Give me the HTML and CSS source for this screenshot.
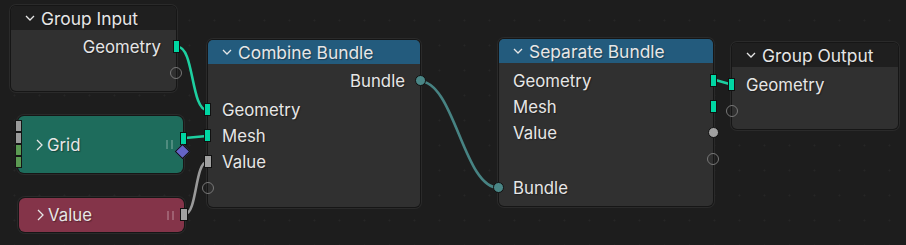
FILE: index.html
```html
<!DOCTYPE html>
<html lang="en">
<head>
    <meta charset="UTF-8">
    <title>Node Editor</title>
    <link rel="stylesheet" href="styles.css">
</head>
<body>
    <div class="canvas">
        <!-- links between sockets -->
        <svg class="links" width="906" height="245" viewBox="0 0 906 245">
            <path class="link geo" d="M178 47 C194 47 191 110 207 110"/>
            <path class="link geo" d="M185 138 L207 136"/>
            <path class="link float" d="M185 214 C197 214 195 162 207 162"/>
            <path class="link bundle" d="M419 81 C455 81 463 188 499 188"/>
            <path class="link geo" d="M712 79 L733 85"/>
        </svg>

        <!-- Group Input -->
        <div class="node group-input">
            <div class="node-header dark">
                <svg class="chevron" width="10" height="6" viewBox="0 0 10 6"><polyline points="1,1 5,5 9,1"/></svg>
                <span>Group Input</span>
            </div>
            <div class="node-body">
                <div class="row out">Geometry<span class="sock geo-sock right"></span></div>
                <div class="row out"><span class="sock empty right"></span></div>
            </div>
        </div>

        <!-- Grid (collapsed) -->
        <div class="node collapsed grid">
            <div class="stack">
                <span class="gray"></span><span class="gray"></span><span class="green"></span><span class="green"></span>
            </div>
            <svg class="chevron-right" width="7" height="12" viewBox="0 0 7 12"><polyline points="1,1 6,6 1,11"/></svg>
            <span class="title">Grid</span>
            <span class="grip"><i></i><i></i></span>
            <span class="sock geo-sock right grid-out"></span>
            <span class="diamond"></span>
        </div>

        <!-- Value (collapsed) -->
        <div class="node collapsed value">
            <svg class="chevron-right" width="7" height="12" viewBox="0 0 7 12"><polyline points="1,1 6,6 1,11"/></svg>
            <span class="title">Value</span>
            <span class="grip"><i></i><i></i></span>
            <span class="sock float-sock right"></span>
        </div>

        <!-- Combine Bundle -->
        <div class="node combine">
            <div class="node-header blue">
                <svg class="chevron" width="10" height="6" viewBox="0 0 10 6"><polyline points="1,1 5,5 9,1"/></svg>
                <span>Combine Bundle</span>
            </div>
            <div class="node-body">
                <div class="row out">Bundle<span class="sock bundle-sock right"></span></div>
                <div class="inputs">
                    <div class="row"><span class="sock geo-sock left"></span>Geometry</div>
                    <div class="row"><span class="sock geo-sock left"></span>Mesh</div>
                    <div class="row"><span class="sock float-sock left"></span>Value</div>
                    <div class="row"><span class="sock empty left"></span></div>
                </div>
            </div>
        </div>

        <!-- Separate Bundle -->
        <div class="node separate">
            <div class="node-header blue">
                <svg class="chevron" width="10" height="6" viewBox="0 0 10 6"><polyline points="1,1 5,5 9,1"/></svg>
                <span>Separate Bundle</span>
            </div>
            <div class="node-body">
                <div class="row">Geometry<span class="sock geo-sock right"></span></div>
                <div class="row">Mesh<span class="sock geo-sock right"></span></div>
                <div class="row">Value<span class="sock float-round right"></span></div>
                <div class="row"><span class="sock empty right"></span></div>
                <div class="inputs">
                    <div class="row"><span class="sock bundle-sock left"></span>Bundle</div>
                </div>
            </div>
        </div>

        <!-- Group Output -->
        <div class="node group-output">
            <div class="node-header dark">
                <svg class="chevron" width="10" height="6" viewBox="0 0 10 6"><polyline points="1,1 5,5 9,1"/></svg>
                <span>Group Output</span>
            </div>
            <div class="node-body">
                <div class="row"><span class="sock geo-sock left"></span>Geometry</div>
                <div class="row"><span class="sock empty left"></span></div>
            </div>
        </div>
    </div>
</body>
</html>
```

FILE: styles.css
```css
body {
    margin: 0;
    background-color: #1d1d1d;
    font-family: Inter, "Noto Sans", sans-serif;
    color: #e6e6e6;
}

.canvas {
    position: relative;
    width: 906px;
    height: 245px;
    overflow: hidden;
    background-color: #1d1d1d;
    background-image: radial-gradient(circle, #262626 0.8px, transparent 1.2px);
    background-size: 25px 25px;
    background-position: 2px 8px;
}

/* links */
.links {
    position: absolute;
    left: 0;
    top: 0;
}

.link {
    fill: none;
    stroke-width: 2.6;
    stroke-linecap: round;
}

.link.geo { stroke: #1dcfa0; }
.link.float { stroke: #9a9a9a; }
.link.bundle { stroke: #478383; }

/* nodes */
.node {
    position: absolute;
    background-color: #303030;
    border-radius: 5px;
    box-shadow: 0 0 0 1px #161616, 0 0 0 2px #2a2a2a;
    font-size: 16.8px;
    text-shadow: 1px 1px 1px rgba(0, 0, 0, 0.35);
}

.group-input { left: 11px; top: 6px; width: 165px; }
.combine { left: 208px; top: 40px; width: 212px; }
.separate { left: 499px; top: 39px; width: 214px; }
.group-output { left: 732px; top: 43px; width: 166px; }

.node-header {
    height: 24px;
    display: flex;
    align-items: center;
    gap: 6px;
    padding-left: 14px;
    border-radius: 5px 5px 0 0;
    font-size: 17.4px;
}

.node-header.dark { background-color: #1f1f1f; }
.node-header.blue { background-color: #235b7d; }

.chevron polyline,
.chevron-right polyline {
    fill: none;
    stroke: #e6e6e6;
    stroke-width: 1.3;
}

.node-body {
    padding: 4px 0 5px;
}

.separate .node-body,
.group-output .node-body {
    padding-top: 5px;
}

.combine .node-body {
    padding-bottom: 6px;
}

.inputs {
    margin-top: 3px;
}

.row {
    position: relative;
    height: 26px;
    display: flex;
    align-items: center;
    padding: 0 14px;
}

.row.out {
    justify-content: flex-end;
    padding-right: 15px;
}

/* sockets */
.sock {
    position: absolute;
    top: 50%;
    box-sizing: border-box;
    border: 1px solid #111;
}

.sock.right { right: -4px; }
.sock.left { left: -4px; }

.geo-sock {
    width: 7px;
    height: 13px;
    margin-top: -7px;
    background-color: #00d6a3;
}

.float-sock {
    width: 8px;
    height: 13px;
    margin-top: -7px;
    background-color: #a1a1a1;
}

.float-round {
    width: 11px;
    height: 11px;
    margin-top: -6px;
    border-radius: 50%;
    background-color: #a1a1a1;
}

.sock.float-round.right { right: -6px; }

.bundle-sock {
    width: 11px;
    height: 11px;
    margin-top: -6px;
    border-radius: 50%;
    background-color: #4a8686;
}

.sock.bundle-sock.right { right: -6px; }
.sock.bundle-sock.left { left: -6px; }

.empty {
    width: 12px;
    height: 12px;
    margin-top: -6px;
    border-radius: 50%;
    border: 1.3px solid #777;
    background: transparent;
}

.sock.empty.right { right: -6px; }
.sock.empty.left { left: -6px; }

/* collapsed nodes */
.collapsed {
    display: flex;
    align-items: center;
    gap: 4px;
    padding-left: 18px;
    box-sizing: border-box;
    border-radius: 6px;
}

.grid {
    left: 18px;
    top: 116px;
    width: 165px;
    height: 57px;
    background-color: #1e6c5c;
}

.value {
    left: 19px;
    top: 198px;
    width: 165px;
    height: 34px;
    background-color: #843449;
}

.collapsed .title {
    flex: 1;
}

.grip {
    display: flex;
    gap: 3px;
    margin-right: 10px;
}

.grip i {
    width: 2px;
    height: 9px;
    background-color: rgba(255, 255, 255, 0.22);
}

.stack {
    position: absolute;
    left: -3px;
    top: 4px;
    display: flex;
    flex-direction: column;
}

.stack span {
    width: 7px;
    height: 12px;
    box-sizing: border-box;
    border: 1px solid #151515;
}

.stack .gray { background-color: #9a9a9a; }
.stack .green { background-color: #5b9a52; }

.grid .grid-out {
    top: 16px;
    margin-top: 0;
}

.diamond {
    position: absolute;
    right: -5px;
    top: 30px;
    width: 9px;
    height: 9px;
    background-color: #6464c8;
    border: 1px solid #111;
    transform: rotate(45deg);
}
```
